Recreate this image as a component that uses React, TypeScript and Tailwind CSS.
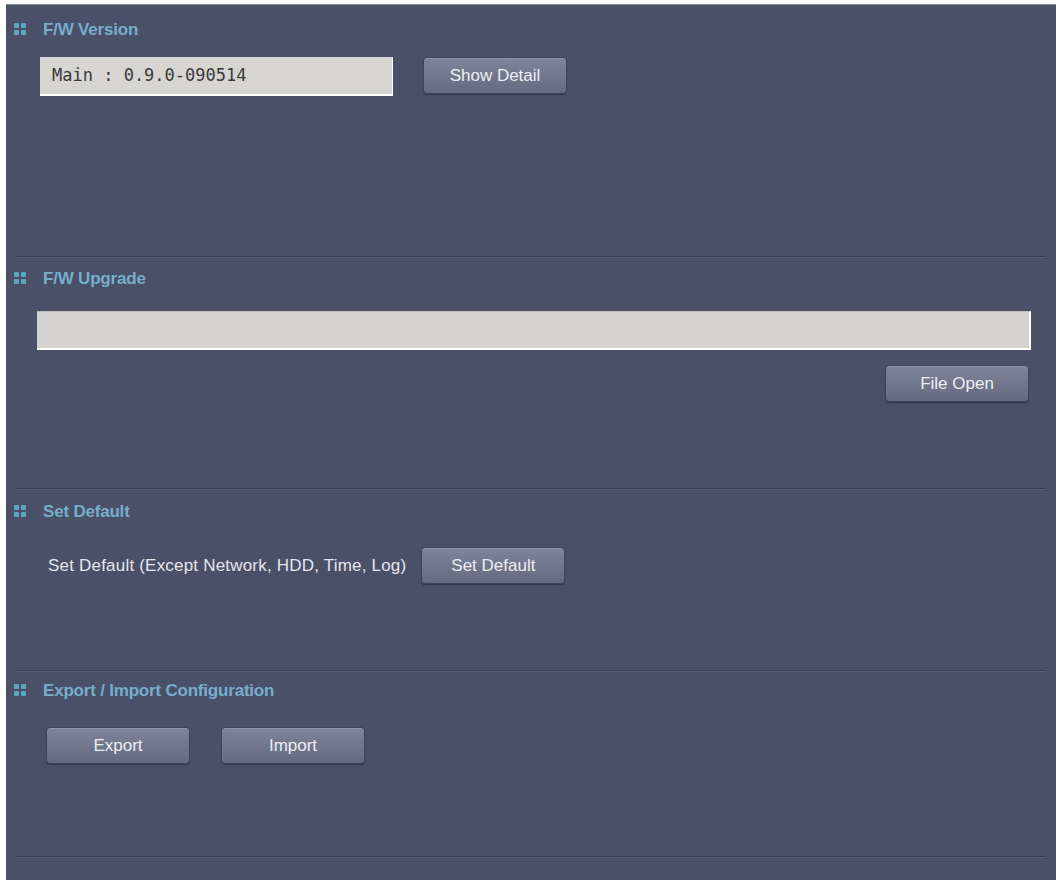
import React from "react";

const font = { fontFamily: '"Liberation Sans", Arial, sans-serif' };

function Icon() {
  return (
    <div className="grid grid-cols-2 gap-[2px] w-[12px] shrink-0">
      <div className="w-[5px] h-[5px] bg-[#5fa6c2] rounded-[1px]" />
      <div className="w-[5px] h-[5px] bg-[#5fa6c2] rounded-[1px]" />
      <div className="w-[5px] h-[5px] bg-[#5fa6c2] rounded-[1px]" />
      <div className="w-[5px] h-[5px] bg-[#5fa6c2] rounded-[1px]" />
    </div>
  );
}

function Header({ title }: { title: string }) {
  return (
    <div className="flex items-center h-[18px] pl-[8px] gap-[17px]">
      <Icon />
      <span className="text-[17px] font-bold text-[#76aecb] tracking-[-0.2px] leading-none">{title}</span>
    </div>
  );
}

function Btn({ label, className = "" }: { label: string; className?: string }) {
  return (
    <div
      className={
        "w-[144px] h-[37px] rounded-[4px] border border-[#3f4458] bg-gradient-to-b from-[#7e8499] to-[#646a80] shadow-[0_1px_1px_rgba(0,0,0,0.35),inset_0_1px_0_rgba(255,255,255,0.15)] flex items-center justify-center text-[17px] text-[#eceef4] " +
        className
      }
    >
      {label}
    </div>
  );
}

function Divider() {
  return (
    <div className="mx-[10px]">
      <div className="h-px bg-[#363b50]" />
      <div className="h-px bg-[#5a607a]" />
    </div>
  );
}

export default function App() {
  return (
    <div className="w-[1062px] h-[884px] bg-white pt-[4px] pl-[6px]" style={font}>
      <div className="w-[1050px] h-[876px] bg-[#4a5068] border-t border-[#8a8f9e] flex flex-col">
        {/* Section 1 */}
        <div className="h-[251px] pt-[15px]">
          <Header title="F/W Version" />
          <div className="flex items-start mt-[19px] pl-[34px]">
            <div
              className="w-[353px] h-[39px] bg-[#d6d5d2] border-b-2 border-r border-white flex items-center pl-[12px] text-[17px] text-[#3a3a3a]"
              style={{ fontFamily: '"DejaVu Sans Mono", monospace' }}
            >
              Main : 0.9.0-090514
            </div>
            <Btn label="Show Detail" className="ml-[30px]" />
          </div>
        </div>
        <Divider />
        {/* Section 2 */}
        <div className="h-[230px] pt-[11px]">
          <Header title="F/W Upgrade" />
          <div className="mt-[24px] ml-[31px] w-[994px] h-[39px] bg-[#d4d3cf] border-b-2 border-r-2 border-white border-t border-t-[#bdbcb8]" />
          <div className="flex justify-end mt-[15px] pr-[27px]">
            <Btn label="File Open" />
          </div>
        </div>
        <Divider />
        {/* Section 3 */}
        <div className="h-[180px] pt-[12px]">
          <Header title="Set Default" />
          <div className="flex items-center mt-[27px] pl-[42px]">
            <span className="text-[17px] text-[#e4e6ee] tracking-[0.2px]">
              Set Default (Except Network, HDD, Time, Log)
            </span>
            <Btn label="Set Default" className="ml-[15px]" />
          </div>
        </div>
        <Divider />
        {/* Section 4 */}
        <div className="h-[184px] pt-[9px]">
          <Header title="Export / Import Configuration" />
          <div className="flex items-center mt-[28px] pl-[40px] gap-[31px]">
            <Btn label="Export" />
            <Btn label="Import" />
          </div>
        </div>
        <Divider />
      </div>
    </div>
  );
}
